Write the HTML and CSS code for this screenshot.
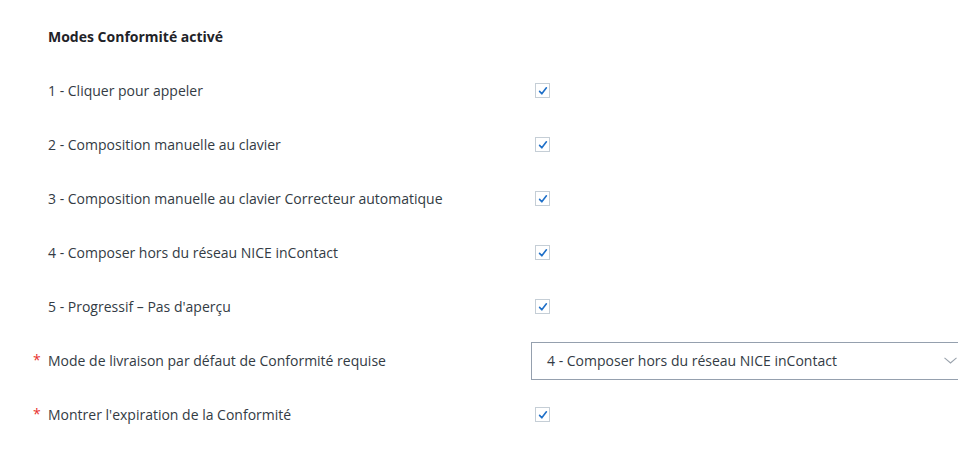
FILE: index.html
```html
<!DOCTYPE html>
<html lang="fr">
<head>
<meta charset="utf-8">
<link rel="stylesheet" href="styles.css">
</head>
<body>
<div class="page">
  <div class="row title-row">
    <div class="label title">Modes Conformité activé</div>
  </div>
  <div class="row">
    <div class="label">1 - Cliquer pour appeler</div>
    <div class="control"><span class="cb"><svg viewBox="0 0 14 14" width="14" height="14"><path d="M3.6 7.4 L5.8 9.8 L10.4 3.8" fill="none" stroke="#1e6fc8" stroke-width="1.6" stroke-linecap="round" stroke-linejoin="round"/></svg></span></div>
  </div>
  <div class="row">
    <div class="label">2 - Composition manuelle au clavier</div>
    <div class="control"><span class="cb"><svg viewBox="0 0 14 14" width="14" height="14"><path d="M3.6 7.4 L5.8 9.8 L10.4 3.8" fill="none" stroke="#1e6fc8" stroke-width="1.6" stroke-linecap="round" stroke-linejoin="round"/></svg></span></div>
  </div>
  <div class="row">
    <div class="label">3 - Composition manuelle au clavier Correcteur automatique</div>
    <div class="control"><span class="cb"><svg viewBox="0 0 14 14" width="14" height="14"><path d="M3.6 7.4 L5.8 9.8 L10.4 3.8" fill="none" stroke="#1e6fc8" stroke-width="1.6" stroke-linecap="round" stroke-linejoin="round"/></svg></span></div>
  </div>
  <div class="row">
    <div class="label">4 - Composer hors du réseau NICE inContact</div>
    <div class="control"><span class="cb"><svg viewBox="0 0 14 14" width="14" height="14"><path d="M3.6 7.4 L5.8 9.8 L10.4 3.8" fill="none" stroke="#1e6fc8" stroke-width="1.6" stroke-linecap="round" stroke-linejoin="round"/></svg></span></div>
  </div>
  <div class="row">
    <div class="label">5 - Progressif – Pas d'aperçu</div>
    <div class="control"><span class="cb"><svg viewBox="0 0 14 14" width="14" height="14"><path d="M3.6 7.4 L5.8 9.8 L10.4 3.8" fill="none" stroke="#1e6fc8" stroke-width="1.6" stroke-linecap="round" stroke-linejoin="round"/></svg></span></div>
  </div>
  <div class="row">
    <div class="label req">Mode de livraison par défaut de Conformité requise</div>
    <div class="control">
      <div class="select">
        <span class="select-text">4 - Composer hors du réseau NICE inContact</span>
        <svg class="chev" viewBox="0 0 13 7" width="13" height="7"><path d="M0.5 0.8 L6.5 6 L12.5 0.8" fill="none" stroke="#9aa3ad" stroke-width="1.1"/></svg>
      </div>
    </div>
  </div>
  <div class="row">
    <div class="label req">Montrer l'expiration de la Conformité</div>
    <div class="control"><span class="cb"><svg viewBox="0 0 14 14" width="14" height="14"><path d="M3.6 7.4 L5.8 9.8 L10.4 3.8" fill="none" stroke="#1e6fc8" stroke-width="1.6" stroke-linecap="round" stroke-linejoin="round"/></svg></span></div>
  </div>
</div>
</body>
</html>
```

FILE: styles.css
```css
html, body {
  margin: 0;
  padding: 0;
  background: #ffffff;
}
body {
  font-family: "Open Sans", "Liberation Sans", sans-serif;
  font-size: 14px;
  color: #333b44;
}
.page {
  width: 958px;
  overflow: hidden;
  padding-top: 9px;
}
.row {
  display: flex;
  align-items: center;
  height: 54px;
}
.label {
  width: 483px;
  padding-left: 48px;
  flex: none;
  position: relative;
  white-space: nowrap;
}
.title {
  font-weight: 700;
  color: #1f2328;
}
.req::before {
  content: "*";
  color: #e8322d;
  position: absolute;
  left: 33px;
  top: -1px;
}
.control {
  flex: 1;
  display: flex;
  align-items: center;
  min-width: 0;
}
.cb {
  display: block;
  width: 15px;
  height: 15px;
  margin-left: 4px;
  margin-top: 1px;
  border: 1px solid #c5ced6;
  box-sizing: border-box;
  background: #fff;
}
.cb svg {
  display: block;
  margin: -0.5px 0 0 -0.5px;
}
.select {
  flex: none;
  width: 440px;
  height: 38px;
  box-sizing: border-box;
  border: 1px solid #95a0ae;
  display: flex;
  align-items: center;
  padding: 0 13px 0 15px;
  margin-top: 1px;
}
.select-text {
  flex: 1;
  color: #333b44;
}
.chev {
  display: block;
}
```
